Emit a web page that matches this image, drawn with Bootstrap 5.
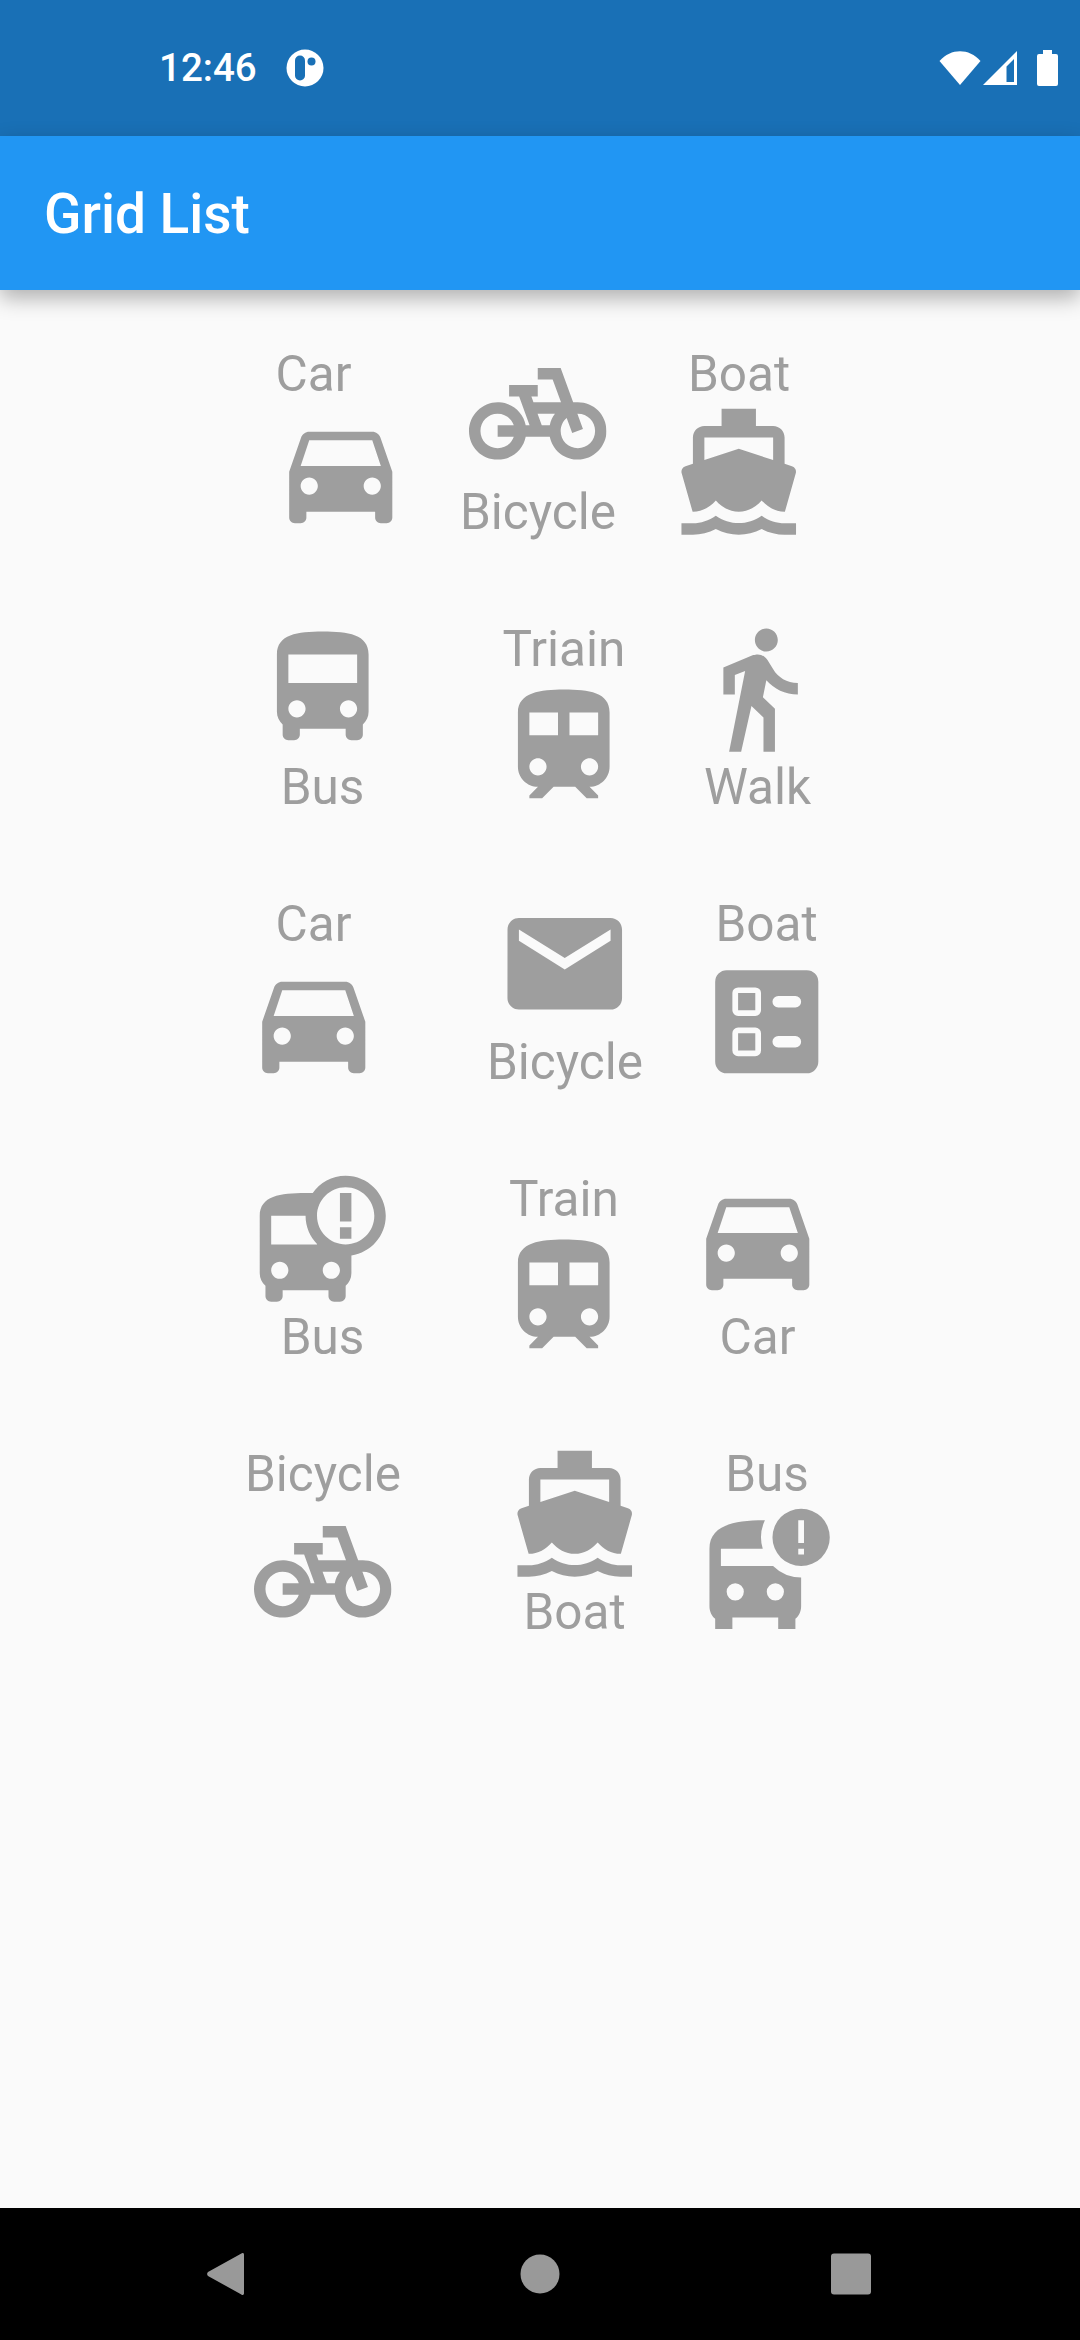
<!DOCTYPE html>
<html lang="en">
<head>
    <meta charset="UTF-8">
    <title>Grid List</title>
    <link href="https://cdn.jsdelivr.net/npm/bootstrap@5.3.3/dist/css/bootstrap.min.css" rel="stylesheet">
    <style>
        body { background: #fafafa; font-family: Roboto, "Liberation Sans", sans-serif; }
        .status-strip { height: 136px; background: #1970b6; padding: 0 22px 0 159px; }
        .clock-text { font-size: 38.5px; font-weight: 500; line-height: 1; width: 127px; }
        .app-head { height: 154px; padding: 2px 44px 0; background: #2196f3; box-shadow: 0 8px 20px rgba(0, 0, 0, .3); z-index: 2; }
        .app-head .navbar-brand { margin: 0; padding: 0; color: #fff; font-size: 55px; font-weight: 500; line-height: 1; }
        .page-body { padding-top: 55px; row-gap: 79.5px; }
        .tile-line { display: grid; height: 195.5px; }
        .line-a { padding-left: 252px; grid-template-columns: 211px 201px 150px; }
        .line-b { padding-left: 247.5px; grid-template-columns: 241.5px 193.5px 150px; }
        .line-c { padding-left: 238.5px; grid-template-columns: 251.5px 201.5px 150px; }
        .line-d { padding-left: 248px; grid-template-columns: 251.5px 192.5px 150px; }
        .tile-cell { width: 150px; }
        .tile-label { color: #9e9e9e; font-size: 49.5px; line-height: 58px; white-space: nowrap; }
        .tile-icon { width: 137.5px; height: 137.5px; flex: none; fill: #9e9e9e; }
        .nudge-left { margin-right: 27px; }
        .nudge-right { margin-left: 27px; }
        .soft-keys { height: 132px; padding: 0 208px 0 205px; background: #000; }
        .soft-keys svg { fill: #999; }
        .wifi-gap { margin-right: 2px; }
        .battery-gap { margin-left: 20px; }
    </style>
</head>
<body class="d-flex flex-column vh-100 overflow-hidden">

<svg class="d-none">
    <symbol id="i-car" viewBox="0 0 24 24"><path d="M18.92 6.01C18.72 5.42 18.16 5 17.5 5h-11c-.66 0-1.21.42-1.42 1.01L3 12v8c0 .55.45 1 1 1h1c.55 0 1-.45 1-1v-1h12v1c0 .55.45 1 1 1h1c.55 0 1-.45 1-1v-8l-2.08-5.99zM6.5 16c-.83 0-1.5-.67-1.5-1.5S5.67 13 6.5 13s1.5.67 1.5 1.5S7.33 16 6.5 16zm11 0c-.83 0-1.5-.67-1.5-1.5s.67-1.5 1.5-1.5 1.5.67 1.5 1.5-.67 1.5-1.5 1.5zM5 11l1.5-4.5h11L19 11H5z"/></symbol>
    <symbol id="i-bike" viewBox="0 0 24 24"><path d="M18.18 10l-2.18-6H12v2h2.6l1.46 4h-4.81l-.36-1H12V7H7v2h1.75l1.82 5H9.9c-.44-2.23-2.31-3.88-4.65-3.99C2.45 9.87 0 12.2 0 15c0 2.8 2.2 5 5 5 2.46 0 4.45-1.69 4.9-4h4.2c.44 2.23 2.31 3.88 4.65 3.99 2.8.13 5.25-2.19 5.25-5 0-2.8-2.2-5-5-5h-.82zM7.82 16c-.4 1.17-1.49 2-2.82 2-1.68 0-3-1.32-3-3s1.32-3 3-3c1.33 0 2.42.83 2.82 2H5v2h2.82zm6.28-2h-1.4l-.73-2H15c-.44.58-.76 1.25-.9 2zm4.9 4c-1.68 0-3-1.32-3-3 0-.93.41-1.73 1.05-2.28l.96 2.64 1.88-.68-.97-2.67c.03 0 .06-.01.09-.01 1.68 0 3 1.32 3 3s-1.33 3-3.01 3z"/></symbol>
    <symbol id="i-boat" viewBox="0 0 24 24"><path d="M20 21c-1.39 0-2.78-.47-4-1.32-2.44 1.71-5.56 1.71-8 0C6.78 20.53 5.39 21 4 21H2v2h2c1.38 0 2.74-.35 4-.99 2.52 1.29 5.48 1.29 8 0 1.26.65 2.62.99 4 .99h2v-2h-2zM3.95 19H4c1.6 0 3.02-.88 4-2 .98 1.12 2.4 2 4 2s3.02-.88 4-2c.98 1.12 2.4 2 4 2h.05l1.89-6.68c.08-.26.06-.54-.06-.78s-.34-.42-.6-.5L20 10.62V6c0-1.1-.9-2-2-2h-3V1H9v3H6c-1.1 0-2 .9-2 2v4.62l-1.29.42c-.26.08-.48.26-.6.5s-.15.52-.06.78L3.95 19zM6 6h12v3.97L12 8 6 9.97V6z"/></symbol>
    <symbol id="i-bus" viewBox="0 0 24 24"><path d="M4 16c0 .88.39 1.67 1 2.22V20c0 .55.45 1 1 1h1c.55 0 1-.45 1-1v-1h8v1c0 .55.45 1 1 1h1c.55 0 1-.45 1-1v-1.78c.61-.55 1-1.34 1-2.22V6c0-3.5-3.58-4-8-4s-8 .5-8 4v10zm3.5 1c-.83 0-1.5-.67-1.5-1.5S6.67 14 7.5 14s1.5.67 1.5 1.5S8.33 17 7.5 17zm9 0c-.83 0-1.5-.67-1.5-1.5s.67-1.5 1.5-1.5 1.5.67 1.5 1.5-.67 1.5-1.5 1.5zm1.5-6H6V6h12v5z"/></symbol>
    <symbol id="i-train" viewBox="0 0 24 24"><path d="M12 2c-4 0-8 .5-8 4v9.5C4 17.43 5.57 19 7.5 19L6 20.5v.5h2.23l2-2H14l2 2h2v-.5L16.5 19c1.93 0 3.5-1.57 3.5-3.5V6c0-3.5-3.58-4-8-4zM7.5 17c-.83 0-1.5-.67-1.5-1.5S6.67 14 7.5 14s1.5.67 1.5 1.5S8.33 17 7.5 17zm3.5-7H6V6h5v4zm2 0V6h5v4h-5zm3.5 7c-.83 0-1.5-.67-1.5-1.5s.67-1.5 1.5-1.5 1.5.67 1.5 1.5-.67 1.5-1.5 1.5z"/></symbol>
</svg>

<div class="status-strip d-flex align-items-center text-white">
    <span class="clock-text">12:46</span>
    <svg width="38" height="38" viewBox="0 0 38 38">
        <circle cx="19" cy="19" r="18.5" fill="#fff"/>
        <rect x="9" y="6.5" width="10" height="25" rx="5" fill="#1970b6"/>
        <circle cx="25.5" cy="12.5" r="4" fill="#1970b6"/>
    </svg>
    <div class="ms-auto d-flex align-items-center">
        <svg class="wifi-gap" width="42" height="36" viewBox="0 0 42 36" fill="#fff"><path d="M0.5 11C12 -2 30 -2 41.5 11L21 35Z"/></svg>
        <svg width="34" height="35" viewBox="0 0 34 35" fill="#fff"><path fill-rule="evenodd" d="M0 34 34 0V34ZM23.5 15.5V31H31V8Z"/></svg>
        <svg class="battery-gap" width="21" height="36" viewBox="0 0 21 36" fill="#fff"><path d="M6 0h9v4h4a2 2 0 0 1 2 2v28a2 2 0 0 1-2 2H2a2 2 0 0 1-2-2V6a2 2 0 0 1 2-2h4z"/></svg>
    </div>
</div>

<nav class="navbar app-head position-relative">
    <span class="navbar-brand">Grid List</span>
</nav>

<main class="page-body flex-grow-1 d-flex flex-column">
    <div class="tile-line line-a">
        <div class="tile-cell d-flex flex-column align-items-center">
            <span class="tile-label nudge-left">Car</span>
            <svg class="tile-icon nudge-right"><use href="#i-car"/></svg>
        </div>
        <div class="tile-cell d-flex flex-column align-items-center">
            <svg class="tile-icon"><use href="#i-bike"/></svg>
            <span class="tile-label">Bicycle</span>
        </div>
        <div class="tile-cell d-flex flex-column align-items-center">
            <span class="tile-label">Boat</span>
            <svg class="tile-icon"><use href="#i-boat"/></svg>
        </div>
    </div>

    <div class="tile-line line-b">
        <div class="tile-cell d-flex flex-column align-items-center">
            <svg class="tile-icon"><use href="#i-bus"/></svg>
            <span class="tile-label">Bus</span>
        </div>
        <div class="tile-cell d-flex flex-column align-items-center">
            <span class="tile-label">Triain</span>
            <svg class="tile-icon"><use href="#i-train"/></svg>
        </div>
        <div class="tile-cell d-flex flex-column align-items-center">
            <svg class="tile-icon" viewBox="0 0 24 24"><path d="M13.5 5.5c1.1 0 2-.9 2-2s-.9-2-2-2-2 .9-2 2 .9 2 2 2zM9.8 8.9L7 23h2.1l1.8-8 2.1 2v6h2v-7.5l-2.1-2 .6-3C14.8 12 16.8 13 19 13v-2c-1.9 0-3.5-1-4.3-2.4l-1-1.6c-.4-.6-1-1-1.7-1-.3 0-.5.1-.8.1L6 8.3V13h2V9.6l1.8-.7"/></svg>
            <span class="tile-label">Walk</span>
        </div>
    </div>

    <div class="tile-line line-c">
        <div class="tile-cell d-flex flex-column align-items-center">
            <span class="tile-label">Car</span>
            <svg class="tile-icon"><use href="#i-car"/></svg>
        </div>
        <div class="tile-cell d-flex flex-column align-items-center">
            <svg class="tile-icon" viewBox="0 0 24 24"><path d="M20 4H4c-1.1 0-1.99.9-1.99 2L2 18c0 1.1.9 2 2 2h16c1.1 0 2-.9 2-2V6c0-1.1-.9-2-2-2zm0 4l-8 5-8-5V6l8 5 8-5v2z"/></svg>
            <span class="tile-label">Bicycle</span>
        </div>
        <div class="tile-cell d-flex flex-column align-items-center">
            <span class="tile-label">Boat</span>
            <svg class="tile-icon" viewBox="0 0 24 24"><path fill-rule="evenodd" d="M5 3h14a2 2 0 0 1 2 2v14a2 2 0 0 1-2 2H5a2 2 0 0 1-2-2V5a2 2 0 0 1 2-2zM14 7.500a1 1 0 0 0 0 2h3a1 1 0 0 0 0-2zM14 14.500a1 1 0 0 0 0 2h3a1 1 0 0 0 0-2zM7 6a1 1 0 0 0-1 1v3a1 1 0 0 0 1 1h3a1 1 0 0 0 1-1V7a1 1 0 0 0-1-1zM7 7h3v3H7zM7 13a1 1 0 0 0-1 1v3a1 1 0 0 0 1 1h3a1 1 0 0 0 1-1v-3a1 1 0 0 0-1-1zM7 14h3v3H7z"/></svg>
        </div>
    </div>

    <div class="tile-line line-b">
        <div class="tile-cell d-flex flex-column align-items-center">
            <svg class="tile-icon" viewBox="0 0 24 24"><path d="M16 1c-2.4 0-4.52 1.21-5.78 3.05.01-.01.01-.02.02-.03C9.84 4 9.43 4 9 4c-4.42 0-8 .5-8 4v10c0 .88.39 1.67 1 2.22V22c0 .55.45 1 1 1h1c.55 0 1-.45 1-1v-1h8v1c0 .55.45 1 1 1h1c.55 0 1-.45 1-1v-1.78c.61-.55 1-1.34 1-2.22v-3.08c3.39-.49 6-3.39 6-6.92 0-3.87-3.13-7-7-7zM4.500 19c-.83 0-1.5-.67-1.5-1.5S3.670 16 4.500 16s1.500.67 1.500 1.500S5.330 19 4.500 19zM3 13V8h6c0 1.910.76 3.640 2 4.900V13H3zm10.500 6c-.83 0-1.500-.67-1.500-1.500s.67-1.500 1.500-1.500 1.500.67 1.500 1.500-.67 1.500-1.500 1.500zM16 13c-2.760 0-5-2.240-5-5s2.240-5 5-5 5 2.240 5 5-2.240 5-5 5zm-1-9h2v5h-2zm0 6h2v2h-2z"/></svg>
            <span class="tile-label">Bus</span>
        </div>
        <div class="tile-cell d-flex flex-column align-items-center">
            <span class="tile-label">Train</span>
            <svg class="tile-icon"><use href="#i-train"/></svg>
        </div>
        <div class="tile-cell d-flex flex-column align-items-center">
            <svg class="tile-icon"><use href="#i-car"/></svg>
            <span class="tile-label">Car</span>
        </div>
    </div>

    <div class="tile-line line-d">
        <div class="tile-cell d-flex flex-column align-items-center">
            <span class="tile-label">Bicycle</span>
            <svg class="tile-icon"><use href="#i-bike"/></svg>
        </div>
        <div class="tile-cell d-flex flex-column align-items-center">
            <svg class="tile-icon"><use href="#i-boat"/></svg>
            <span class="tile-label">Boat</span>
        </div>
        <div class="tile-cell d-flex flex-column align-items-center">
            <span class="tile-label">Bus</span>
            <svg class="tile-icon" viewBox="0 0 24 24"><path fill-rule="evenodd" d="M2 8c0-4 4-5 9.680-5A7 7 0 0 0 11.300 8H4v3h9.100A7 7 0 0 0 18 13v5c0 .9-.4 1.700-1 2.200V22h-3v-2H6v2H3v-1.800C2.400 19.700 2 18.900 2 18zM6.500 14a1.500 1.500 0 1 0 0 3 1.500 1.500 0 0 0 0-3zM13.500 14a1.500 1.500 0 1 0 0 3 1.500 1.500 0 0 0 0-3zM18 1a5 5 0 1 0 0 10 5 5 0 0 0 0-10zM17.500 3h1v4h-1zM17.500 8h1v1h-1z"/></svg>
        </div>
    </div>
</main>

<div class="soft-keys d-flex align-items-center justify-content-between">
    <svg width="42" height="46" viewBox="0 0 42 46"><path d="M39 3.500V42.500a1.500 1.500 0 0 1-2.600 1L3 25a3 3 0 0 1 0-4L36.400 2.500a1.500 1.500 0 0 1 2.600 1z"/></svg>
    <svg width="42" height="46" viewBox="0 0 42 46"><circle cx="22" cy="23" r="19.500"/></svg>
    <svg width="42" height="46" viewBox="0 0 42 46"><rect x="1" y="2.500" width="40" height="41" rx="3"/></svg>
</div>

</body>
</html>
